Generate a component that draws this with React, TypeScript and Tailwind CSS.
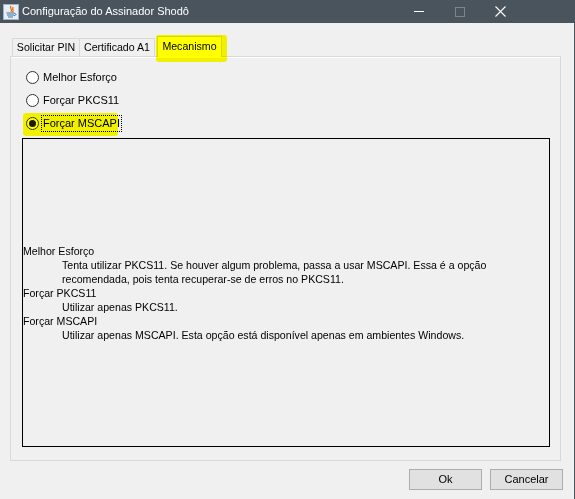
import React, { useState } from 'react';

const font = { fontFamily: '"Liberation Sans", Arial, sans-serif' };

function JavaIcon() {
    return (
        <svg width="16" height="16" viewBox="0 0 16 16">
            <rect x="0.5" y="0.5" width="15" height="15" fill="#e8eef5" stroke="#9fb3c8" />
            <path d="M8 2 C6 4 10 5 8 8 M10 3 C9 5 11 6 9.5 8" stroke="#e76f00" strokeWidth="1.3" fill="none" />
            <path d="M3.5 9 H11.5 M4 11 H11 M5 13 H10" stroke="#3a6ea5" strokeWidth="1.2" />
            <path d="M11.5 9.5 C13.5 9.5 13.5 11.5 11 11.5" stroke="#3a6ea5" strokeWidth="1" fill="none" />
        </svg>
    );
}

function Radio({ label, checked, focused, onClick }: { label: string; checked: boolean; focused?: boolean; onClick: () => void }) {
    return (
        <div className="h-[23px] flex items-center pl-[4px] cursor-default" onClick={onClick}>
            <span className="w-[13px] h-[13px] rounded-full border border-[#333] bg-white flex items-center justify-center">
                {checked && <span className="w-[7px] h-[7px] rounded-full bg-[#1a1a1a]" />}
            </span>
            <span className={`ml-[3px] px-[1px] leading-[15px] text-[11px] text-black ${focused ? 'outline outline-1 outline-dotted outline-black' : ''}`}>
                {label}
            </span>
        </div>
    );
}

export default function App() {
    const [mode, setMode] = useState(2);
    const options = ['Melhor Esforço', 'Forçar PKCS11', 'Forçar MSCAPI'];

    return (
        <div className="w-[575px] h-[499px] bg-[#f0f0f0] flex flex-col border-r border-[#4a545c] relative overflow-hidden" style={font}>
            <div className="h-[23px] bg-[#4a545c] flex items-center text-white shrink-0">
                <div className="ml-[3px] mt-[1px]"><JavaIcon /></div>
                <span className="ml-[3px] text-[11px]">Configuração do Assinador Shodô</span>
                <div className="ml-auto flex items-center mr-[53px]">
                    <div className="w-[41px] flex justify-center"><span className="block w-[10px] h-[1px] bg-white" /></div>
                    <div className="w-[41px] flex justify-center"><span className="block w-[10px] h-[10px] border border-[#7c858c]" /></div>
                    <div className="w-[41px] flex justify-center">
                        <svg width="11" height="11" viewBox="0 0 11 11"><path d="M0.5 0.5 L10.5 10.5 M10.5 0.5 L0.5 10.5" stroke="white" strokeWidth="1.1" /></svg>
                    </div>
                </div>
            </div>

            <div className="pt-[13px] px-[10px] flex flex-col">
                <div className="flex items-end h-[20px] pl-[2px] text-[10.6px] text-black whitespace-nowrap">
                    <div className="h-[18px] w-[68px] shrink-0 flex items-center justify-center border border-b-0 border-[#d9d9d9] bg-[#f0f0f0]">Solicitar PIN</div>
                    <div className="h-[18px] w-[75px] shrink-0 flex items-center justify-center border border-b-0 border-l-0 border-[#d9d9d9] bg-[#f0f0f0]">Certificado A1</div>
                    <div className="h-[21px] -mb-[1px] ml-[2px] w-[65px] shrink-0 flex items-center justify-center border border-b-0 border-[#d9d9d9] bg-white relative z-10">Mecanismo</div>
                </div>
                <div className="h-[405px] w-[551px] border border-[#d9d9d9] bg-[#f0f0f0] flex flex-col pt-[9px] pl-[11px] pr-[10px] shadow-[inset_0_1px_0_#ffffff]">
                    {options.map((o, i) => (
                        <Radio key={o} label={o} checked={mode === i} focused={mode === i && i === 2} onClick={() => setMode(i)} />
                    ))}
                    <div className="mt-[3px] h-[309px] border border-black flex flex-col justify-center text-[10.6px] leading-[14px] text-black">
                        <div>Melhor Esforço</div>
                        <div className="pl-[39px]">
                            Tenta utilizar PKCS11. Se houver algum problema, passa a usar MSCAPI. Essa é a opção<br />
                            recomendada, pois tenta recuperar-se de erros no PKCS11.
                        </div>
                        <div>Forçar PKCS11</div>
                        <div className="pl-[39px]">Utilizar apenas PKCS11.</div>
                        <div>Forçar MSCAPI</div>
                        <div className="pl-[39px]">Utilizar apenas MSCAPI. Esta opção está disponível apenas em ambientes Windows.</div>
                    </div>
                </div>
                <div className="flex justify-end gap-[8px] mt-[8px] mr-[1px]">
                    <button className="w-[73px] h-[21px] border border-[#adadad] bg-[#e1e1e1] text-[11px] text-black">Ok</button>
                    <button className="w-[73px] h-[21px] border border-[#adadad] bg-[#e1e1e1] text-[11px] text-black">Cancelar</button>
                </div>
            </div>

            {/* highlighter marks */}
            <div className="absolute left-[156px] top-[35px] w-[71px] h-[27px] rounded-[3px] bg-[#ffff00] mix-blend-multiply z-20 pointer-events-none" />
            <div className="absolute left-[23px] top-[113px] w-[95px] h-[23px] rounded-[3px] bg-[#ffff00] mix-blend-multiply z-20 pointer-events-none" />
        </div>
    );
}
